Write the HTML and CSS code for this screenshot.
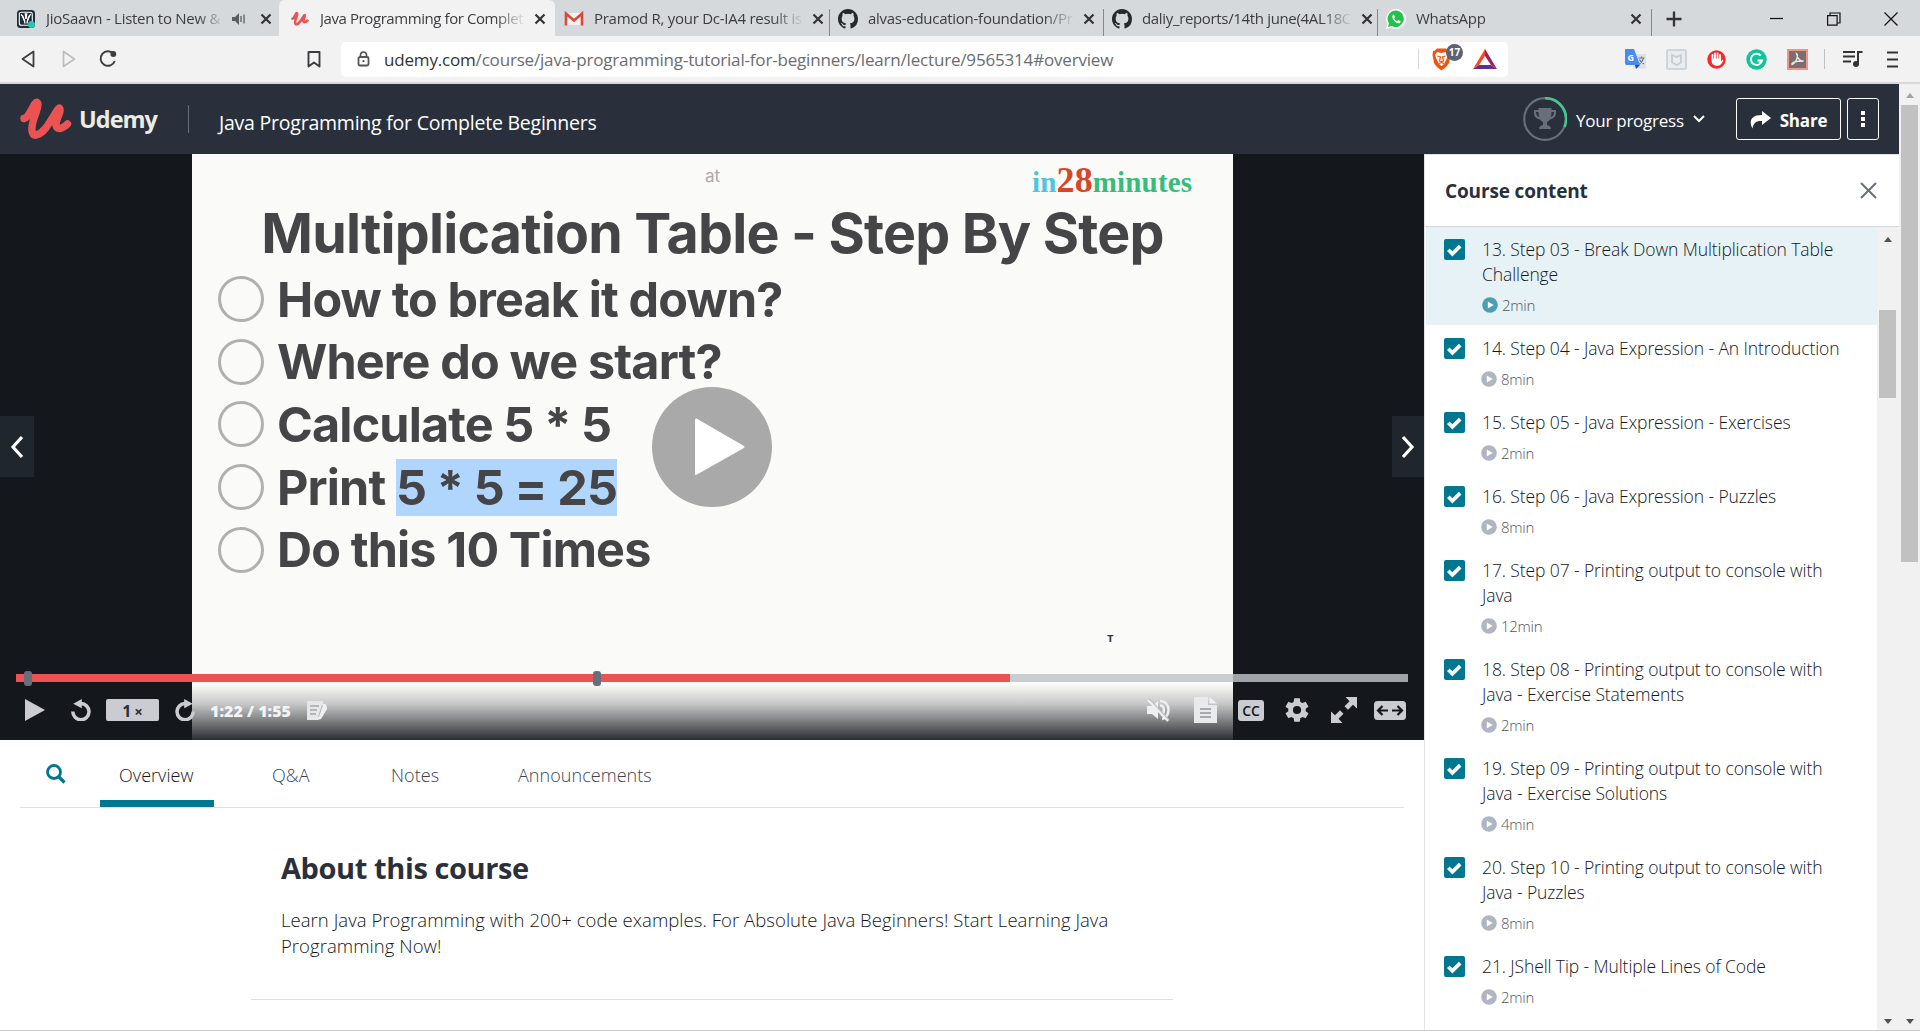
FILE: index.html
```html
<!DOCTYPE html>
<html lang="en">
<head>
<meta charset="utf-8">
<title>Java Programming for Complete Beginners | Udemy</title>
<link rel="stylesheet" href="styles.css">
</head>
<body>
<svg class="defs" width="0" height="0">
  <symbol id="x" viewBox="0 0 12 12"><path d="M1.500 1.500l9 9M10.500 1.500l-9 9" fill="none" stroke="#333" stroke-width="2.200"/></symbol>
  <symbol id="github" viewBox="0 0 16 16"><path fill="#24292e" d="M8 0C3.580 0 0 3.580 0 8c0 3.540 2.290 6.530 5.470 7.590.4.070.550-.170.550-.380 0-.190-.010-.820-.010-1.490-2.010.370-2.530-.490-2.690-.940-.090-.230-.480-.940-.820-1.130-.280-.150-.680-.520-.010-.530.630-.010 1.080.580 1.230.820.720 1.210 1.870.870 2.330.660.070-.520.280-.870.510-1.070-1.780-.2-3.640-.890-3.640-3.950 0-.870.310-1.590.820-2.150-.080-.2-.360-1.020.080-2.120 0 0 .670-.210 2.200.820a7.600 7.600 0 0 1 4 0c1.530-1.040 2.200-.820 2.200-.820.440 1.100.160 1.920.080 2.120.510.560.820 1.270.820 2.150 0 3.070-1.870 3.750-3.650 3.950.290.250.540.730.540 1.480 0 1.070-.010 1.930-.010 2.200 0 .210.150.460.550.380A8 8 0 0 0 16 8c0-4.420-3.580-8-8-8z"/></symbol>
  <symbol id="udemy-u" viewBox="0 0 52 43"><path d="M4 20.500C8 20 11 12 15 5.500Q17 2.500 18 6C18 12 14 18 12.500 26c-1.500 7 0 12 4 11C26 34 31 21 38 11Q40.500 8.500 40 13C39 18 36.500 21 36 26c-.5 6 5 6 11.500 0" fill="none" stroke="#ec5252" stroke-width="7.400" stroke-linecap="round" stroke-linejoin="round"/></symbol>
  <symbol id="check" viewBox="0 0 21 21"><rect width="21" height="21" rx="2" fill="#007791"/><path d="M4.300 10.800l4.100 4 7.800-7.700" fill="none" stroke="#fff" stroke-width="3.700"/></symbol>
  <symbol id="pcircle" viewBox="0 0 16 16"><circle cx="8" cy="8" r="7.800" fill="currentColor"/><path d="M5.800 4.500v7l5.900-3.500z" fill="#fff"/></symbol>
  <symbol id="replay" viewBox="0 0 20 22"><path d="M1.800 12.500a8.100 8.100 0 1 0 8.200-8" fill="none" stroke="#cbccd1" stroke-width="3.500"/><path d="M10.800 0v9.300L2.200 4.800z" fill="#cbccd1"/></symbol>
</svg>

<div class="tabstrip">
  <div class="tab">
    <svg class="fav" viewBox="0 0 20 20"><rect x="1" y="1" width="18" height="18" rx="3.500" fill="#1d2c38"/><rect x="3.300" y="3.300" width="13" height="13" rx="2" fill="none" stroke="#fff" stroke-width="1.100"/><path d="M5 5.500c2.500 1.500 3.500 5 4 9M15 5c-2.500 1.500-3.500 5-4 9.500M9.300 5l.7 5 .7-5z" stroke="#fff" stroke-width="1.300" fill="#fff"/><circle cx="15.500" cy="15.500" r="3.500" fill="#2bc5b4"/></svg>
    <span class="tab-title">JioSaavn - Listen to New &amp;</span>
    <svg class="audio" viewBox="0 0 14 12"><path d="M0 4h3l4-4v12L3 8H0z" fill="#5c5f62"/><path d="M9 3v6M12 1.500v9" stroke="#5c5f62" stroke-width="1.300"/></svg>
    <svg class="tab-x"><use href="#x"/></svg>
  </div>
  <div class="tab active">
    <svg class="fav"><use href="#udemy-u"/></svg>
    <span class="tab-title t2">Java Programming for Complet</span>
    <svg class="tab-x"><use href="#x"/></svg>
  </div>
  <div class="tab">
    <svg class="fav" viewBox="0 0 20 20"><path d="M2 4h16v12H2z" fill="#f5f1ef"/><path d="M2 16.500V4.500l8 7 8-7v12" fill="none" stroke="#d9483b" stroke-width="2.600"/></svg>
    <span class="tab-title">Pramod R, your Dc-IA4 result is</span>
    <svg class="tab-x"><use href="#x"/></svg>
  </div>
  <div class="tab line">
    <svg class="fav"><use href="#github"/></svg>
    <span class="tab-title">alvas-education-foundation/Pr</span>
    <svg class="tab-x"><use href="#x"/></svg>
  </div>
  <div class="tab line">
    <svg class="fav"><use href="#github"/></svg>
    <span class="tab-title t5">daliy_reports/14th june(4AL18C</span>
    <svg class="tab-x"><use href="#x"/></svg>
  </div>
  <div class="tab line">
    <svg class="fav" viewBox="0 0 20 20"><path d="M10 0a10 10 0 1 1-5 18.600L0 20l1.500-5A10 10 0 0 1 10 0z" fill="#fff"/><path d="M10 1.500a8.300 8.300 0 1 1-4.400 15.600L2 18l1-3.600A8.300 8.300 0 0 1 10 1.500z" fill="#25c14d"/><path d="M7.300 5.500c-3.200 2 1.700 9.500 6 8.700 1.400-.3 1.600-2 1-2.300l-1.900-.9-1.100 1.200c-1.400-.4-2.700-1.800-3.100-3l.8-1-.8-2.300z" fill="#fff"/></svg>
    <span class="tab-title">WhatsApp</span>
    <svg class="tab-x"><use href="#x"/></svg>
  </div>
  <div class="newtab"><svg width="16" height="16" viewBox="0 0 16 16"><path d="M8 .5v15M.5 8h15" stroke="#333" stroke-width="2.300"/></svg></div>
  <div class="winbtns">
    <svg width="14" height="14"><path d="M0 6.500h13" stroke="#111" stroke-width="1.200"/></svg>
    <svg width="14" height="14" fill="none" stroke="#111" stroke-width="1.200"><path d="M.6 3.600h9.500v9.500H.6zM3 3.500V1h10v10h-2.500"/></svg>
    <svg width="14" height="14"><path d="M.5.5l13 13M13.500.5l-13 13" stroke="#111" stroke-width="1.200"/></svg>
  </div>
</div>

<div class="toolbar">
  <svg class="tb back" width="14" height="18" viewBox="0 0 14 18"><path d="M12.500 1.500v15L1.500 9z" fill="none" stroke="#3c3d40" stroke-width="1.800" stroke-linejoin="round"/></svg>
  <svg class="tb fwd" width="14" height="18" viewBox="0 0 14 18"><path d="M1.500 1.500v15L12.500 9z" fill="none" stroke="#bdbdbf" stroke-width="1.700" stroke-linejoin="round"/></svg>
  <svg class="tb reload" width="18" height="18" viewBox="0 0 18 18"><path d="M14.500 3.800A7.300 7.300 0 1 0 15.800 11" fill="none" stroke="#3c3d40" stroke-width="2"/><circle cx="14.300" cy="4" r="2.900" fill="#3c3d40"/></svg>
  <svg class="tb mark" width="14" height="17" viewBox="0 0 14 17"><path d="M1.500 1h11v14.500l-5.500-4-5.500 4z" fill="none" stroke="#3c3d40" stroke-width="1.900" stroke-linejoin="round"/></svg>
  <div class="urlbar">
    <svg width="13" height="16" viewBox="0 0 13 16"><rect x="1.500" y="6" width="10" height="8.500" rx="1.500" fill="none" stroke="#555" stroke-width="1.800"/><path d="M3.500 6V4a3 3 0 0 1 6 0v2" fill="none" stroke="#555" stroke-width="1.700"/><circle cx="6.500" cy="10.200" r="1.100" fill="#555"/></svg>
    <span class="url"><b>udemy.com</b>/course/java-programming-tutorial-for-beginners/learn/lecture/9565314#overview</span>
    <div class="shields">
      <svg width="19" height="23" viewBox="0 0 19 23"><path d="M5 .5h9l2 2 2 .5.500 4-1.500 8-3 4-4.500 3.500L5 19l-3-4L.5 7 1 3l2-.5z" fill="#f75108"/><path d="M5 4l4.500 1L14 4l2 3-1.500 4-1 2-1.500 3-2.500 2L7 16l-1.500-3-1-2L3 7z" fill="#fff"/><path d="M5.500 8l3 1-1 4 2 1 2-1-1-4 3-1M7 15.500l2.500-1 2.500 1" fill="none" stroke="#f75108" stroke-width="1.200"/></svg>
      <span class="badge">17</span>
      <svg width="24" height="20" viewBox="0 0 24 20"><path d="M12 0L0 20l6-4 6-9z" fill="#ff4724"/><path d="M12 0l12 20-6-4-6-9z" fill="#9e1f63"/><path d="M0 20h24l-6-4H6z" fill="#662d91"/></svg>
    </div>
  </div>
  <div class="exts">
    <svg width="21" height="21" viewBox="0 0 21 21"><rect x="8" y="5" width="13" height="14.500" fill="#dfe1e4"/><path d="M0 0h9l6 16H1.500Q0 16 0 14z" fill="#4a8af4"/><path d="M10 16h5l-4 4z" fill="#2743a8"/><path d="M13.500 9h6M16.500 7.500V9M18.500 9c-.5 3-2 4.500-4 6M14.500 10.500c1 2.500 2.500 3.500 4.500 4.500" stroke="#607a86" stroke-width="1.200" fill="none"/><text x="2.500" y="11.500" class="gt">G</text></svg>
    <svg width="21" height="21" viewBox="0 0 21 21"><rect x="1" y="1" width="19" height="19" rx="1" fill="#eaedef" stroke="#c6ccd1" stroke-width="1.600"/><path d="M6 6l4.500 2L15 6v7.500L10.500 16 6 13.500z" fill="none" stroke="#c6ccd1" stroke-width="1.800"/></svg>
    <svg width="19" height="19" viewBox="0 0 19 19"><circle cx="9.500" cy="9.500" r="9.200" fill="#f72a2a"/><path d="M5.500 9V5M8 9V3.500M10.500 9V3.500M13 9V5" stroke="#fff" stroke-width="1.800" stroke-linecap="round"/><path d="M4.600 8.500H14v3l1.500-2q1 0 .5 1.500c-1 2.500-2.500 4.800-6 4.800-4 0-5.400-2.500-5.400-5z" fill="#fff"/></svg>
    <svg width="21" height="21" viewBox="0 0 21 21"><circle cx="10.500" cy="10.500" r="10.200" fill="#15c39a"/><path d="M14.700 6.600A5.600 5.600 0 1 0 16 11.500h-4.500M13.500 14.500l2.500-3" fill="none" stroke="#fff" stroke-width="2"/></svg>
    <svg width="21" height="21" viewBox="0 0 21 21"><rect x="1" y="1" width="19" height="19" fill="#7b6e6e" stroke="#ef9585" stroke-width="2"/><path d="M9.500 4.500q2 1.500 0 6t-4.500 5c-1-1.500 4-4 11-3.500-.5 1.500-6-2-6.500-7.500z" fill="none" stroke="#e9e4e4" stroke-width="1.400"/></svg>
    <i class="vr"></i>
    <svg class="list" width="20" height="18" viewBox="0 0 20 18"><path d="M0 2h12M0 6.500h12M0 11.500h8M15 1v13M15 2h4.500" fill="none" stroke="#333" stroke-width="2"/><circle cx="13" cy="14" r="3" fill="#333"/></svg>
    <svg class="burger" width="12" height="17" viewBox="0 0 12 17"><path d="M0 1.500h11M0 8.500h11M0 15.500h11" stroke="#333" stroke-width="1.900"/></svg>
  </div>
</div>

<div class="page">
  <div class="app">
    <header class="head">
      <svg class="logo" width="52" height="43"><use href="#udemy-u"/></svg>
      <span class="brand">Udemy</span>
      <i class="sep"></i>
      <span class="course">Java Programming for Complete Beginners</span>
      <div class="right">
        <svg width="44" height="44" viewBox="0 0 44 44"><circle cx="22" cy="22" r="20.800" fill="none" stroke="#686f7a" stroke-width="2.200"/><path d="M22 1.200A20.800 20.800 0 0 1 41.500 30" fill="none" stroke="#45c48e" stroke-width="2.600"/><path d="M15.500 11h13v2H33v3c0 4-3 6-6 6.500-1 1.500-2.500 2-3 3V28c2 .5 4 1.500 4 4H16c0-2.500 2-3.500 4-4v-2.500c-.5-1-2-1.500-3-3C14 22 11 20 11 16v-3h4.500zM13 15c0 3 1.500 4.500 3.500 5-1-2-1-3-1-5zm15.500 0c0 2 0 3-1 5 2-.5 3.500-2 3.500-5z" fill="#686f7a" fill-rule="evenodd"/></svg>
        <span class="progress">Your progress</span>
        <svg class="chev" width="12" height="8" viewBox="0 0 12 8"><path d="M1 1l5 5 5-5" fill="none" stroke="#fff" stroke-width="2"/></svg>
        <div class="btn share"><svg width="21" height="18" viewBox="0 0 21 18"><path d="M12 0l9 7-9 7V10C7 9.500 3.500 11 2.500 17.500-1 11 0 4 12 4z" fill="#fff"/></svg><span>Share</span></div>
        <div class="btn dots"><i></i><i></i><i></i></div>
      </div>
    </header>
    <div class="body">
      <main class="main">
        <section class="video">
          <div class="slide">
            <p class="at">at</p>
            <h1>Multiplication Table - Step By Step</h1>
            <ul>
              <li><i></i><span>How to break it down?</span></li>
              <li><i></i><span>Where do we start?</span></li>
              <li><i></i><span>Calculate 5 * 5</span></li>
              <li><i></i><span>Print <mark>5 * 5 = 25</mark></span></li>
              <li><i></i><span>Do this 10 Times</span></li>
            </ul>
          </div>
          <p class="in28"><span class="in">in</span><b>28</b><span class="mn">minutes</span></p>
          <span class="cursor">T</span>
          <div class="shade"></div>
          <svg class="bigplay" width="120" height="120" viewBox="0 0 120 120"><circle cx="60" cy="60" r="60" fill="#a9a9a9"/><path d="M43 33v54q0 1.500 1.500.7L92 61q1-1 0-2L44.500 31.500q-1.500-.5-1.500 1.500z" fill="#fff"/></svg>
          <div class="nav prev"><svg width="14" height="24" viewBox="0 0 14 24"><path d="M12 2L3 12l9 10" fill="none" stroke="#fff" stroke-width="3.200"/></svg></div>
          <div class="nav next"><svg width="14" height="24" viewBox="0 0 14 24"><path d="M2 2l9 10-9 10" fill="none" stroke="#fff" stroke-width="3.200"/></svg></div>
          <div class="bar"><div class="played"></div><i class="m1"></i><i class="m2"></i></div>
          <div class="controls">
            <svg class="c-play" width="20" height="22" viewBox="0 0 20 22"><path d="M0 0l20 11L0 22z" fill="#cbccd1"/></svg>
            <svg class="c-rew" width="20" height="22"><use href="#replay"/></svg>
            <span class="speed">1<small>×</small></span>
            <svg class="c-fwd" width="20" height="22"><use href="#replay"/></svg>
            <span class="time">1:22 / 1:55</span>
            <svg class="c-note" width="21" height="19" viewBox="0 0 21 19"><path d="M0 0h16v6l-4 9-1 4H0z" fill="#e6e7e8"/><path d="M3 5h9M3 9h7M3 13h6" stroke="#a4a6a8" stroke-width="1.500"/><path d="M16 3q4-1 4 5l-6 10-4 1 1-4z" fill="#eef0f1"/><path d="M15.500 4l-4 12" stroke="#b2b4b6"/></svg>
            <div class="c-right">
              <svg class="c-mute" width="24" height="24" viewBox="0 0 24 24"><path d="M0 8h5l6-5v18l-6-5H0z" fill="#edeff0"/><path d="M13 3c11 0 11 16 2 18M13 7.500c5 0 5 8 1 10" fill="none" stroke="#edeff0" stroke-width="2.500"/><path d="M2 1l20 21" stroke="#b9bbbd" stroke-width="1.500"/><path d="M1 2l20 21" stroke="#edeff0" stroke-width="2.200"/></svg>
              <svg class="c-file" width="23" height="26" viewBox="0 0 23 26"><path d="M0 0h14v8h9v18H0z" fill="#e9eaec"/><path d="M15.500 0l7.500 6.500h-7.500z" fill="#f1f2f3"/><path d="M6 12h11M6 16h11M6 20h11" stroke="#929497" stroke-width="1.500"/></svg>
              <span class="cc">CC</span>
              <svg class="c-gear" width="28" height="28" viewBox="0 0 24 24"><path fill="#cbccd1" d="M19.430 12.980c.040-.320.070-.640.070-.980s-.030-.660-.070-.980l2.110-1.650c.190-.150.240-.420.120-.640l-2-3.460c-.120-.220-.390-.3-.610-.220l-2.490 1c-.520-.4-1.080-.730-1.690-.980l-.380-2.650C14.460 2.180 14.250 2 14 2h-4c-.250 0-.460.180-.490.420l-.380 2.650c-.610.250-1.170.590-1.690.980l-2.490-1c-.230-.090-.490 0-.610.220l-2 3.460c-.130.220-.070.490.120.640l2.110 1.650c-.040.320-.070.650-.070.980s.030.660.070.980l-2.110 1.650c-.190.150-.240.420-.120.640l2 3.460c.120.220.390.3.610.220l2.490-1c.520.4 1.080.730 1.690.980l.380 2.650c.030.240.240.420.490.420h4c.250 0 .460-.180.490-.420l.380-2.650c.610-.250 1.170-.590 1.690-.980l2.490 1c.230.090.490 0 .610-.220l2-3.460c.120-.220.070-.490-.120-.640l-2.110-1.650zM12 15.500a3.500 3.500 0 1 1 0-7 3.500 3.500 0 0 1 0 7z"/></svg>
              <svg class="c-full" width="26" height="26" viewBox="0 0 26 26"><path d="M14.500 0H26v11.500l-4-3.800-5 5-3.500-3.500 5-5zM11.500 26H0V14.500l4 3.800 5-5 3.500 3.500-5 5z" fill="#cbccd1"/></svg>
              <svg width="32" height="19" viewBox="0 0 32 19"><rect width="32" height="19" rx="3.500" fill="#cbccd1"/><path d="M4 9.500h10M18 9.500h10M8.500 5L4 9.500 8.500 14M23.500 5L28 9.500 23.500 14" fill="none" stroke="#14171c" stroke-width="2.200"/></svg>
            </div>
          </div>
        </section>
        <nav class="tabs">
          <svg class="search" width="20" height="20" viewBox="0 0 20 20"><circle cx="8" cy="8" r="6.500" fill="none" stroke="#007791" stroke-width="2.800"/><path d="M12.500 12.500l6 6" stroke="#007791" stroke-width="3.200"/></svg>
          <span class="on">Overview</span><span class="q">Q&amp;A</span><span class="n">Notes</span><span class="a">Announcements</span>
        </nav>
        <section class="about">
          <h2>About this course</h2>
          <p>Learn Java Programming with 200+ code examples. For Absolute Java Beginners! Start Learning Java<br>Programming Now!</p>
        </section>
      </main>
      <aside class="side">
        <div class="side-head"><span>Course content</span><svg width="17" height="17" viewBox="0 0 17 17"><path d="M1 1l15 15M16 1L1 16" stroke="#686f7a" stroke-width="2"/></svg></div>
        <div class="side-body">
          <div class="items">
            <div class="item cur"><svg class="ck"><use href="#check"/></svg><div><p>13. Step 03 - Break Down Multiplication Table<br>Challenge</p><small><svg><use href="#pcircle"/></svg>2min</small></div></div>
            <div class="item"><svg class="ck"><use href="#check"/></svg><div><p>14. Step 04 - Java Expression - An Introduction</p><small><svg><use href="#pcircle"/></svg>8min</small></div></div>
            <div class="item"><svg class="ck"><use href="#check"/></svg><div><p>15. Step 05 - Java Expression - Exercises</p><small><svg><use href="#pcircle"/></svg>2min</small></div></div>
            <div class="item"><svg class="ck"><use href="#check"/></svg><div><p>16. Step 06 - Java Expression - Puzzles</p><small><svg><use href="#pcircle"/></svg>8min</small></div></div>
            <div class="item"><svg class="ck"><use href="#check"/></svg><div><p>17. Step 07 - Printing output to console with<br>Java</p><small><svg><use href="#pcircle"/></svg>12min</small></div></div>
            <div class="item"><svg class="ck"><use href="#check"/></svg><div><p>18. Step 08 - Printing output to console with<br>Java - Exercise Statements</p><small><svg><use href="#pcircle"/></svg>2min</small></div></div>
            <div class="item"><svg class="ck"><use href="#check"/></svg><div><p>19. Step 09 - Printing output to console with<br>Java - Exercise Solutions</p><small><svg><use href="#pcircle"/></svg>4min</small></div></div>
            <div class="item"><svg class="ck"><use href="#check"/></svg><div><p>20. Step 10 - Printing output to console with<br>Java - Puzzles</p><small><svg><use href="#pcircle"/></svg>8min</small></div></div>
            <div class="item"><svg class="ck"><use href="#check"/></svg><div><p>21. JShell Tip - Multiple Lines of Code</p><small><svg><use href="#pcircle"/></svg>2min</small></div></div>
          </div>
          <div class="scroll inner"><i class="up"></i><div class="thumb"></div><i class="down"></i></div>
        </div>
      </aside>
    </div>
  </div>
  <div class="scroll outer"><i class="up"></i><div class="thumb"></div><i class="down"></i></div>
</div>
<div class="edge"></div>
</body>
</html>
```
FILE: styles.css
```css
* { box-sizing: border-box; margin: 0; padding: 0; }
body { width: 1920px; height: 1031px; overflow: hidden; background: #fff; color: #29303b; font-family: "Open Sans", "Noto Sans", sans-serif; display: flex; flex-direction: column; white-space: nowrap; }
svg { display: block; flex: none; }
.defs { position: absolute; }

.tabstrip { height: 36px; flex: none; background: #d5d9dc; display: flex; padding-left: 7px; }
.tab { width: 274px; height: 36px; padding: 1px 9px 0 9px; display: flex; align-items: center; position: relative; flex: none; }
.tab.active { background: #f2f2f2; border-radius: 6px 6px 0 0; width: 276px; margin-left: -2px; padding-left: 11px; }
.tab.line::before { content: ""; position: absolute; left: 0; top: 9px; bottom: 0; width: 1px; background: #85898c; }
.fav { width: 20px; height: 20px; }
.active .fav { width: 18px; margin: 0 1px; }
.tab-title { flex: 1; margin: -1px 10px 0 10px; font-size: 15px; line-height: 22px; letter-spacing: -.27px; color: #3c3d40; -webkit-mask-image: linear-gradient(90deg, #000 86%, transparent 101%); }
.t2 { letter-spacing: -.42px; }
.t5 { letter-spacing: -.34px; }
.tab-x { width: 12px; height: 12px; }
.audio { width: 14px; height: 12px; margin: 0 14px 0 -1px; }
.newtab { width: 47px; display: flex; align-items: center; justify-content: center; border-left: 1px solid #85898c; height: 27px; margin-top: 9px; padding: 0 2px 8px 0; }
.winbtns { flex: 1; display: flex; align-items: center; justify-content: flex-end; gap: 43px; padding: 1px 22px 0 0; }

.toolbar { height: 48px; flex: none; background: #f2f2f2; border-bottom: 2px solid #d5d9dc; display: flex; align-items: center; padding-left: 21px; }
.fwd { margin-left: 27px; }
.reload { margin-left: 23px; }
.mark { margin-left: 190px; }
.urlbar { margin-left: 20px; width: 1167px; height: 35px; border-radius: 5px; background: #fff; display: flex; align-items: center; padding: 0 11px 0 16px; }
.url { margin: 2px 0 0 14px; font-size: 17px; line-height: 24px; letter-spacing: -.18px; color: #6a6c70; }
.url b { font-weight: 400; color: #333; }
.shields { margin-left: auto; display: flex; align-items: center; border-left: 1px solid #d8d8da; height: 20px; padding-left: 13px; position: relative; gap: 22px; }
.badge { position: absolute; left: 27px; top: -5px; width: 17px; height: 17px; border-radius: 9px; background: #5c6270; color: #fff; font-weight: 700; font-size: 10px; line-height: 17px; text-align: center; }
.exts { margin-left: 117px; display: flex; align-items: center; gap: 20px; }
.vr { width: 1px; height: 20px; background: #c0c0c2; margin-left: -4px; margin-right: -2px; }
.burger { margin-left: 4px; }
.gt { font: 700 9px "Open Sans", sans-serif; fill: #fff; }

.page { flex: 1; min-height: 0; display: flex; }
.app { width: 1899px; display: flex; flex-direction: column; }
.head { height: 70px; background: #29303b; color: #fff; display: flex; align-items: center; padding: 0 20px; }
.brand { margin: 0 0 0 7px; width: 78px; font-size: 23.500px; line-height: 30px; font-weight: 700; letter-spacing: -1px; color: #ecebe4; }
.sep { width: 1px; height: 28px; background: #686f7a; margin-left: 31px; }
.course { margin-left: 30px; font-size: 19.500px; line-height: 28px; margin-top: 7px; letter-spacing: -.23px; }
.right { margin-left: auto; display: flex; align-items: center; }
.right > svg:first-child { margin-left: -1px; }
.progress { margin-left: 9px; width: 109px; font-size: 17px; line-height: 24px; letter-spacing: -.25px; margin-top: 3px; }
.chev { margin: 0 31px 0 8px; }
.btn { height: 42px; border: 1.500px solid #fff; border-radius: 3px; display: flex; align-items: center; justify-content: center; }
.share { width: 105px; gap: 9px; font-size: 17px; font-weight: 700; letter-spacing: -.2px; padding-top: 2px; }
.dots { width: 32px; margin-left: 6px; flex-direction: column; gap: 2px; }
.dots i { width: 4px; height: 4px; background: #fff; }

.body { flex: 1; min-height: 0; display: flex; }
.main { width: 1424px; }
.video { height: 586px; background: #14171c; position: relative; }
.slide { width: 1041px; height: 586px; margin-left: 192px; background: #fafaf8; color: #454447; font-family: Inter, "Liberation Sans", sans-serif; font-weight: 700; }
.at { padding-top: 12px; font-size: 17px; line-height: 20px; font-weight: 400; color: #aaa; text-align: center; }
.slide h1 { margin-top: 12px; font-size: 55.500px; line-height: 70px; font-weight: 700; letter-spacing: -.8px; text-align: center; }
.slide ul { list-style: none; padding-left: 26px; }
.slide li { height: 62.600px; display: flex; align-items: center; font-size: 48.500px; font-weight: 700; letter-spacing: -.85px; }
.slide li i { width: 46px; height: 46px; border: 3px solid #b0b0af; border-radius: 50%; margin-right: 13px; }
.slide mark { background: #b0d6fd; color: inherit; display: inline-block; line-height: 57px; }
.in28 { position: absolute; left: 1032px; top: 5.500px; font: 700 29px/40px "Liberation Serif", serif; letter-spacing: .15px; }
.in28 b { font-size: 36px; color: #d5462b; }
.in { color: #4cc6dd; }
.mn { color: #35bd7c; }
.cursor { position: absolute; left: 1107px; top: 479px; font: 700 11px/12px "Liberation Mono", monospace; color: #333; }
.shade { position: absolute; left: 0; right: 0; bottom: 0; height: 56px; background: linear-gradient(rgba(20,23,28,0), rgba(20,23,28,.22) 35%, rgba(20,23,28,.9)); }
.bigplay { position: absolute; left: 652px; top: 233px; }
.nav { position: absolute; top: 262px; width: 34px; height: 61px; background: #20262d; display: flex; align-items: center; justify-content: center; }
.prev { left: 0; }
.next { right: 0; width: 32px; }
.bar { position: absolute; left: 16px; top: 520px; width: 1392px; height: 8px; background: rgba(190,195,199,.82); }
.played { width: 994px; height: 8px; background: #ec5252; }
.bar i { position: absolute; top: -3px; width: 8px; height: 15px; border-radius: 3px; background: #686f7a; }
.m1 { left: 8px; }
.m2 { left: 577px; }
.controls { position: absolute; left: 0; right: 0; top: 539px; height: 34px; display: flex; align-items: center; padding: 0 18px 0 24.500px; }
.c-rew { margin-left: 26.500px; }
.speed { margin-left: 15px; width: 53px; height: 22px; border-radius: 2px; background: #cbccd1; color: #29303b; font-size: 16px; font-weight: 700; line-height: 24px; text-align: center; }
.speed small { font-size: 15px; margin-left: 3px; }
.c-fwd { margin-left: 16px; transform: scaleX(-1); }
.time { margin: 2px 0 0 15px; width: 82px; color: #f3f4f5; font-size: 16px; font-weight: 800; letter-spacing: 0; }
.c-note { margin-left: 15px; }
.c-right { margin-left: auto; display: flex; align-items: center; }
.c-mute { margin-right: 23px; }
.c-file { margin-right: 21px; }
.cc { width: 26px; height: 21px; margin-right: 19px; border-radius: 3px; background: #cbccd1; color: #14171c; font: 600 14px/21px "Open Sans", sans-serif; text-align: center; }
.c-gear { margin-right: 20px; }
.c-full { margin-right: 17px; }

.tabs { height: 68px; margin: 0 20px; border-bottom: 1px solid #dedfe0; display: flex; font-size: 18px; font-weight: 300; line-height: 68px; color: #3d4450; letter-spacing: .05px; }
.search { margin: 24px 34px 0 26px; }
.tabs span { padding-top: 1px; }
.tabs .on { width: 114px; padding-left: 19px; color: #14171c; border-bottom: 7px solid #007791; margin-right: 58px; height: 67px; }
.q { width: 119px; }
.n { width: 127px; }
.about { margin: 0 251px; width: 922px; padding: 38px 30px 0; height: 192px; border-bottom: 1px solid #dedfe0; }
.about h2 { font-size: 29px; line-height: 44px; font-weight: 700; letter-spacing: -.4px; }
.about p { margin-top: 17px; font-size: 18.500px; font-weight: 300; line-height: 26px; letter-spacing: .05px; color: #14171c; }

.side { width: 475px; border-left: 1px solid #e2e3e5; display: flex; flex-direction: column; }
.side-head { height: 73px; flex: none; border-top: 1px solid #dedfe0; border-bottom: 1px solid #d5d8db; display: flex; align-items: center; justify-content: space-between; padding: 0 22px 0 20px; font-size: 19px; font-weight: 700; letter-spacing: -.15px; }
.side-body { flex: 1; min-height: 0; display: flex; overflow: hidden; }
.items { width: 452px; margin-top: -1px; padding-left: 1px; }
.item { display: flex; padding: 11px 0 0 18px; height: 99px; color: #14171c; }
.item:nth-child(2), .item:nth-child(3), .item:nth-child(4), .item:nth-child(9) { height: 74px; }
.cur { background: #e6f2f5; }
.ck { width: 21px; height: 21px; margin: 2px 16px 0 0; }
.item p { font-size: 17.500px; font-weight: 300; line-height: 25px; letter-spacing: -.1px; padding-left: 1px; }
.item small { display: flex; align-items: center; gap: 4px; margin-top: 6px; height: 24px; font-size: 15px; font-weight: 300; letter-spacing: -.25px; color: #50555e; }
.item small svg { width: 16px; height: 16px; color: #b0b5c2; }
.cur small svg { color: #4a9fb2; margin-left: 1px; }
.scroll { background: #f1f1f1; display: flex; flex-direction: column; align-items: center; flex: none; }
.scroll i { border: 4.500px solid transparent; }
.scroll .up { border-top: 0; border-bottom: 5px solid #505050; }
.scroll .down { border-bottom: 0; border-top: 5px solid #505050; margin-top: auto; margin-bottom: 6px; }
.inner { width: 22px; }
.inner .up { margin-top: 10px; }
.inner .thumb { width: 17px; height: 88px; margin-top: 68px; margin-right: 1px; background: #c1c1c1; }
.outer { width: 21px; }
.outer .up { margin-top: 9px; border-bottom-color: #a3a3a3; }
.outer .thumb { width: 17px; height: 457px; margin-top: 7px; background: #c1c1c1; }
.edge { height: 1px; flex: none; background: #ccc; }
```
